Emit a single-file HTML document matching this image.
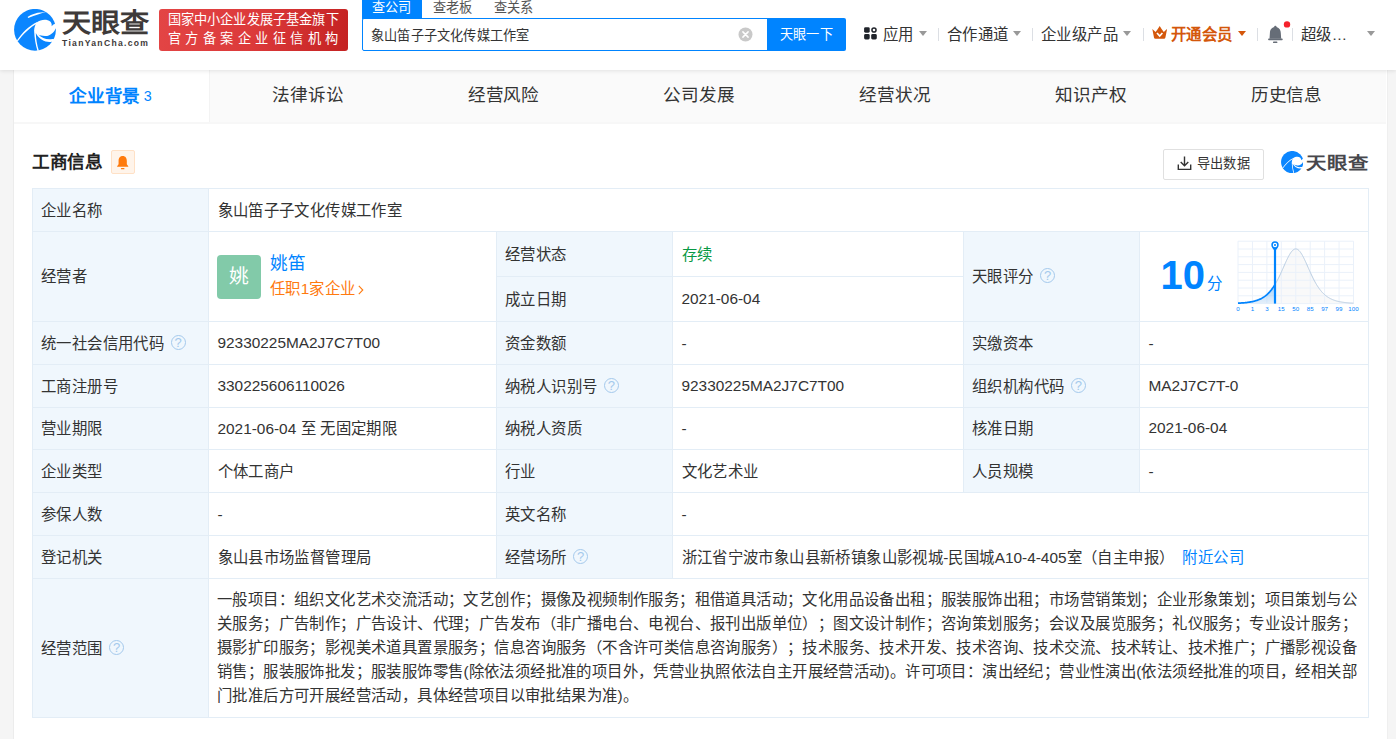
<!DOCTYPE html>
<html lang="zh-CN">
<head>
<meta charset="utf-8">
<title>天眼查</title>
<style>
*{box-sizing:border-box;margin:0;padding:0}
html,body{width:1396px;height:739px;overflow:hidden}
body{font-family:"Liberation Sans",sans-serif;background:#f5f5f5;color:#333;position:relative;font-size:15.4px}
.abs{position:absolute}
/* header */
#hdr{position:absolute;left:0;top:0;width:1396px;height:70px;background:#fff;box-shadow:0 1px 4px rgba(0,0,0,.10);z-index:5}
#logoTxt{position:absolute;left:61.7px;top:6px;font-size:26px;font-weight:bold;color:#3e3a39;line-height:34px;white-space:nowrap;transform-origin:0 50%;transform:scaleX(1.12);letter-spacing:0}
#logoSub{position:absolute;left:62px;top:38px;font-size:8.6px;font-weight:bold;color:#3e3a39;line-height:11px;letter-spacing:1.3px;white-space:nowrap}
#banner{position:absolute;left:159px;top:9px;width:189px;height:42px;border-radius:3px;background:linear-gradient(100deg,#e34545 0%,#dc3a3a 50%,#c42222 100%);color:#fff;font-size:13.2px;white-space:nowrap}
#banner div{position:absolute;left:8.5px;line-height:15px}
#stabs{position:absolute;left:362px;top:0;height:14px;font-size:13.2px;line-height:14px;white-space:nowrap;color:#555}
#stabs span{position:absolute;top:1px;letter-spacing:.2px}
#sinput{position:absolute;left:362px;top:18px;width:406px;height:33px;border:1px solid #0084ff;border-radius:2px 0 0 2px;background:#fff;font-size:13.2px;line-height:33px;padding-left:8px;color:#333;letter-spacing:.2px}
#sbtn{position:absolute;left:767px;top:18px;width:79px;height:33px;background:#0084ff;border-radius:0 2px 2px 0;color:#fff;font-size:13.2px;letter-spacing:.4px;line-height:33px;text-align:center}
.nav{letter-spacing:.4px;position:absolute;top:25px;line-height:20px;font-size:15.4px;color:#333;white-space:nowrap}
.sep{position:absolute;top:28px;width:1px;height:13px;background:#dcdfe4}
.car{position:absolute;top:31px;width:0;height:0;border-left:4px solid transparent;border-right:4px solid transparent;border-top:5px solid #999}
/* main */
#main{position:absolute;left:13px;top:70px;width:1375px;height:669px;background:#fff;border-left:1px solid #ececec;border-right:1px solid #efefef}
#tabs{position:absolute;left:0;top:0;width:1372px;height:54px;background:#fafafa;border-bottom:2px solid #f7f7f7}
.tab{letter-spacing:-.1px;position:absolute;top:0;height:52px;line-height:51px;text-align:center;font-size:17.6px;color:#333;width:195.77px}
.tab.on{background:#fff;color:#0084ff;font-weight:bold;letter-spacing:-.4px;padding-right:2px;line-height:53px;border-right:1px solid #f3f3f3}
.tab.on small{font-size:14.3px;font-weight:normal;margin-left:4px;position:relative;top:-1px;letter-spacing:0}
#ttl{position:absolute;left:32px;top:149px;font-size:17.6px;font-weight:bold;color:#222;line-height:26px;letter-spacing:-.5px}
#bell{position:absolute;left:111px;top:150px;width:24px;height:24px;border:1px solid #ffe1c6;background:#fff4ea;border-radius:2px}
#exp{position:absolute;left:1163px;top:149px;width:101px;height:31px;border:1px solid #e0e0e0;border-radius:2px;background:#fff;font-size:13.2px;line-height:29px;color:#333}
#wm{position:absolute;left:1305.5px;top:150px;font-size:16.5px;font-weight:bold;color:#47474c;line-height:26px;white-space:nowrap;transform-origin:0 50%;transform:scaleX(1.23)}
/* table */
#tb{position:absolute;left:32px;top:188px;width:1337px;border-collapse:separate;border-spacing:0;table-layout:fixed;border-right:1px solid #e3edf6;border-bottom:1px solid #e3edf6;font-size:15.4px;color:#333}
#tb td{letter-spacing:.4px;border-left:1px solid #e3edf6;border-top:1px solid #e3edf6;padding:1px 0 0 8.5px;vertical-align:middle;background:#fff;line-height:22px;white-space:nowrap;overflow:hidden}
#tb td.l{background:#f0f7fd;padding-left:8px}
.q{display:inline-block;width:15px;height:15px;border:1px solid #a4c9ec;border-radius:50%;color:#a4c9ec;font-size:13px;line-height:13px;text-align:center;vertical-align:middle;margin-left:6.5px;position:relative;top:-2px;letter-spacing:0}
a{color:#0084ff;text-decoration:none}
#tb td.n,#tb .n,.n{letter-spacing:0}
#tb td.n{padding:0 0 1px 8.5px}
body{text-spacing-trim:space-all}
#tb td#scope{white-space:nowrap;line-height:24.2px;padding:0 0 0 8px}
.sl{width:1140px;height:24.2px;text-align:justify;text-align-last:justify;white-space:nowrap;overflow:hidden}
.sl.last{text-align:left;text-align-last:left}
</style>
</head>
<body>
<div id="hdr">
<svg class="abs" style="left:14px;top:8.6px" width="42" height="42" viewBox="0 0 42 42">
<circle cx="21" cy="20.8" r="20.9" fill="#0b86ff"/>
<path fill="#fff" d="M22.7 13.4 C27 10.3 33 9.8 36.2 12.6 C37.6 14 38 15.8 37.5 17.2 L39.8 15.3 L43 14.5 L43 19.5 L41.7 19.5 C40 24 35 27.5 31 27 C28 26.8 26 26.5 24.2 25.5 C28 29.5 33 31 38.5 30 L43 30.5 L42 34.5 L37.8 32.8 C32 33.8 25.5 31 21.8 24 C22 30 23 36 24.9 41.8 L23.5 42 C21.8 36 20.3 29 20.1 21.4 C20.3 18.5 21.2 15.8 22.7 13.4 Z"/>
<path fill="#fff" d="M23.2 13 C15 16.8 8 24 2.9 31.5 L3.8 32.3 C9 25 16 18.2 23.4 14.4 Z"/>
<path fill="#fff" d="M13.6 7.9 C17.5 5 24 3 32.2 2.9 C27 4 21.5 6.2 14.2 8.9 Z"/>
</svg>
<div id="logoTxt">天眼查</div>
<div id="logoSub">TianYanCha.com</div>
<div id="banner"><div style="top:3px;letter-spacing:0.17px">国家中小企业发展子基金旗下</div><div style="top:22px;letter-spacing:4.55px">官方备案企业征信机构</div></div>
<div id="stabs"><div class="abs" style="left:0;top:0;width:59.5px;height:18.5px;background:#0084ff"></div><span style="left:10px;color:#fff">查公司</span><span style="left:71px">查老板</span><span style="left:131.5px">查关系</span></div>
<div id="sinput">象山笛子子文化传媒工作室</div>
<svg class="abs" style="left:738px;top:27px" width="15" height="15" viewBox="0 0 15 15"><circle cx="7.5" cy="7.5" r="7" fill="#c9c9c9"/><path d="M4.9 4.9 L10.1 10.1 M10.1 4.9 L4.9 10.1" stroke="#fff" stroke-width="1.5" stroke-linecap="round"/></svg>
<div id="sbtn">天眼一下</div>
<svg class="abs" style="left:864px;top:27.2px" width="13" height="13" viewBox="0 0 13 13"><rect x="0.1" y="0.2" width="5.6" height="5.5" rx="1.4" fill="#20242b"/><rect x="0.1" y="7" width="5.6" height="5.5" rx="1.4" fill="#20242b"/><rect x="7.2" y="7" width="5.6" height="5.5" rx="1.4" fill="#20242b"/><circle cx="10" cy="2.95" r="2.05" fill="none" stroke="#20242b" stroke-width="1.5"/></svg>
<div class="nav" style="left:883px">应用</div><div class="car" style="left:919px"></div><div class="sep" style="left:938px"></div>
<div class="nav" style="left:947px">合作通道</div><div class="car" style="left:1013px"></div><div class="sep" style="left:1032px"></div>
<div class="nav" style="left:1041px">企业级产品</div><div class="car" style="left:1123px"></div><div class="sep" style="left:1143px"></div>
<svg class="abs" style="left:1152px;top:26.2px" width="15.4" height="13" viewBox="0 0 15.4 13"><path d="M0.3 3 L3.6 6.1 Q5.6 3.4 7.7 0 Q9.8 3.4 11.8 6.1 L15.1 3 L13.4 11.4 Q13.2 12.7 12 12.7 L3.4 12.7 Q2.2 12.7 2 11.4 Z" fill="#d4570b"/><path d="M5 7 L7.7 10 L10.4 7" fill="none" stroke="#fff" stroke-width="1.7"/></svg>
<div class="nav" style="left:1171px;color:#d4570b;font-weight:bold">开通会员</div><div class="car" style="left:1238px;border-top-color:#d4570b"></div><div class="sep" style="left:1257px"></div>
<svg class="abs" style="left:1266px;top:20px" width="26" height="26" viewBox="0 0 26 26"><rect x="8.2" y="5.8" width="2.3" height="2.4" rx="1" fill="#666d77"/><path d="M3.5 18.7 L3.9 13 C3.9 9.4 6.2 6.9 9.35 6.9 C12.5 6.9 14.8 9.4 14.8 13 L15.2 18.7 Z" fill="#666d77"/><rect x="2.1" y="18.4" width="14.6" height="1.8" rx="0.8" fill="#666d77"/><rect x="7" y="21.6" width="4.4" height="1.5" rx="0.7" fill="#666d77"/><circle cx="21" cy="4.4" r="3.2" fill="#f5222d"/></svg>
<div class="sep" style="left:1292px"></div>
<div class="nav" style="left:1301px">超级…</div><div class="car" style="left:1367px"></div>
</div>
<div id="main">
<div id="tabs"><div class="tab on" style="left:0;width:196px">企业背景<small>3</small></div><div class="tab" style="left:195.77px">法律诉讼</div><div class="tab" style="left:391.54px">经营风险</div><div class="tab" style="left:587.31px">公司发展</div><div class="tab" style="left:783.08px">经营状况</div><div class="tab" style="left:978.85px">知识产权</div><div class="tab" style="left:1174.62px">历史信息</div></div>
</div>
<div id="ttl">工商信息</div>
<div id="bell"><svg class="abs" style="left:4.3px;top:3.6px" width="13.4" height="15.6" viewBox="0 0 12 14"><path d="M6 0.8 C8.6 0.8 9.7 2.8 9.7 5.2 L9.7 8.4 L11 10 L11 10.6 L1 10.6 L1 10 L2.3 8.4 L2.3 5.2 C2.3 2.8 3.4 0.8 6 0.8 Z" fill="#ff7a0c"/><rect x="4.4" y="11.6" width="3.2" height="1.3" rx="0.6" fill="#ff7a0c"/></svg></div>
<div id="exp"><svg class="abs" style="left:13px;top:5.5px" width="15" height="15" viewBox="0 0 15 15"><path d="M7.5 0.4 V9.6 M3.7 6 L7.5 9.8 L11.3 6 M1.3 8.6 V13.4 H13.7 V8.6" fill="none" stroke="#333" stroke-width="1.4"/></svg><span class="abs" style="left:33px;top:-1px;letter-spacing:.2px">导出数据</span></div>
<svg class="abs" style="left:1280.5px;top:150.7px" width="22.4" height="22.4" viewBox="0 0 42 42">
<circle cx="21" cy="20.8" r="20.9" fill="#0b86ff"/>
<path fill="#fff" d="M22.7 13.4 C27 10.3 33 9.8 36.2 12.6 C37.6 14 38 15.8 37.5 17.2 L39.8 15.3 L43 14.5 L43 19.5 L41.7 19.5 C40 24 35 27.5 31 27 C28 26.8 26 26.5 24.2 25.5 C28 29.5 33 31 38.5 30 L43 30.5 L42 34.5 L37.8 32.8 C32 33.8 25.5 31 21.8 24 C22 30 23 36 24.9 41.8 L23.5 42 C21.8 36 20.3 29 20.1 21.4 C20.3 18.5 21.2 15.8 22.7 13.4 Z"/>
<path fill="#fff" d="M23.2 13 C15 16.8 8 24 2.9 31.5 L3.8 32.3 C9 25 16 18.2 23.4 14.4 Z"/>
</svg>
<div id="wm">天眼查</div>
<table id="tb">
<colgroup><col style="width:176px"><col style="width:288px"><col style="width:176px"><col style="width:291px"><col style="width:176px"><col style="width:229px"></colgroup>
<tr style="height:43px"><td class="l">企业名称</td><td colspan="5">象山笛子子文化传媒工作室</td></tr>
<tr style="height:45px"><td class="l" rowspan="2">经营者</td><td rowspan="2" style="position:relative">&nbsp;</td><td class="l">经营状态</td><td style="color:#089944">存续</td><td class="l" rowspan="2">天眼评分<span class="q">?</span></td><td rowspan="2">&nbsp;</td></tr>
<tr style="height:45px"><td class="l">成立日期</td><td class="n">2021-06-04</td></tr>
<tr style="height:43px"><td class="l">统一社会信用代码<span class="q">?</span></td><td class="n">92330225MA2J7C7T00</td><td class="l">资金数额</td><td>-</td><td class="l">实缴资本</td><td>-</td></tr>
<tr style="height:43px"><td class="l">工商注册号</td><td class="n">330225606110026</td><td class="l">纳税人识别号<span class="q">?</span></td><td class="n">92330225MA2J7C7T00</td><td class="l">组织机构代码<span class="q">?</span></td><td class="n">MA2J7C7T-0</td></tr>
<tr style="height:42px"><td class="l">营业期限</td><td><span class="n">2021-06-04 </span>至<span class="n"> </span>无固定期限</td><td class="l">纳税人资质</td><td>-</td><td class="l">核准日期</td><td class="n">2021-06-04</td></tr>
<tr style="height:43px"><td class="l">企业类型</td><td>个体工商户</td><td class="l">行业</td><td>文化艺术业</td><td class="l">人员规模</td><td>-</td></tr>
<tr style="height:43px"><td class="l">参保人数</td><td>-</td><td class="l">英文名称</td><td colspan="3">-</td></tr>
<tr style="height:43px"><td class="l">登记机关</td><td>象山县市场监督管理局</td><td class="l">经营场所<span class="q">?</span></td><td colspan="3">浙江省宁波市象山县新桥镇象山影视城<span class="n">-</span>民国城<span class="n">A10-4-405</span>室（自主申报）<a style="margin-left:8px">附近公司</a></td></tr>
<tr style="height:139px"><td class="l">经营范围<span class="q">?</span></td><td colspan="5" id="scope"><div class="sl">一般项目：组织文化艺术交流活动；文艺创作；摄像及视频制作服务；租借道具活动；文化用品设备出租；服装服饰出租；市场营销策划；企业形象策划；项目策划与公</div><div class="sl">关服务；广告制作；广告设计、代理；广告发布（非广播电台、电视台、报刊出版单位）；图文设计制作；咨询策划服务；会议及展览服务；礼仪服务；专业设计服务；</div><div class="sl">摄影扩印服务；影视美术道具置景服务；信息咨询服务（不含许可类信息咨询服务）；技术服务、技术开发、技术咨询、技术交流、技术转让、技术推广；广播影视设备</div><div class="sl">销售；服装服饰批发；服装服饰零售<span class="n">(</span>除依法须经批准的项目外，凭营业执照依法自主开展经营活动<span class="n">)</span>。许可项目：演出经纪；营业性演出<span class="n">(</span>依法须经批准的项目，经相关部</div><div class="sl last">门批准后方可开展经营活动，具体经营项目以审批结果为准<span class="n">)</span>。</div></td></tr>
</table>
<div class="abs" style="left:217px;top:255px;width:44px;height:44px;border-radius:4px;background:#82caa9;color:#fff;font-size:19.8px;line-height:42px;text-align:center">姚</div>
<a class="abs" style="left:270px;top:250px;font-size:17.6px;line-height:26px">姚笛</a>
<div class="abs" style="left:270px;top:278px;font-size:15.4px;line-height:22px;color:#ff7a0f;white-space:nowrap;letter-spacing:.4px">任职<span class="n">1</span>家企业<svg width="6" height="10" viewBox="0 0 6 10" style="margin-left:2px;position:relative;top:0.5px"><path d="M0.8 0.8 L4.8 5 L0.8 9.2" fill="none" stroke="#ff7a0f" stroke-width="1.1"/></svg></div>
<div class="abs" style="left:1160.5px;top:251px;font-size:40px;font-weight:bold;color:#0084ff;line-height:48px;white-space:nowrap">10<span style="font-size:15.4px;font-weight:normal;margin-left:1.5px">分</span></div>
<svg class="abs" style="left:1230px;top:236px" width="132" height="82" viewBox="0 0 132 82">
<defs><linearGradient id="lg" x1="0" y1="0" x2="0" y2="1"><stop offset="0" stop-color="#0084ff" stop-opacity=".34"/><stop offset="1" stop-color="#0084ff" stop-opacity=".08"/></linearGradient></defs>
<path d="M8.00 67.17 L8.50 67.14 L9.00 67.12 L9.50 67.09 L10.00 67.06 L10.50 67.03 L11.00 67.00 L11.50 66.97 L12.00 66.94 L12.50 66.90 L13.00 66.86 L13.50 66.82 L14.00 66.78 L14.50 66.73 L15.00 66.69 L15.50 66.63 L16.00 66.58 L16.50 66.53 L17.00 66.47 L17.50 66.41 L18.00 66.34 L18.50 66.27 L19.00 66.20 L19.50 66.12 L20.00 66.04 L20.50 65.96 L21.00 65.87 L21.50 65.77 L22.00 65.67 L22.50 65.57 L23.00 65.46 L23.50 65.34 L24.00 65.22 L24.50 65.09 L25.00 64.96 L25.50 64.81 L26.00 64.66 L26.50 64.51 L27.00 64.34 L27.50 64.16 L28.00 63.98 L28.50 63.79 L29.00 63.58 L29.50 63.37 L30.00 63.15 L30.50 62.91 L31.00 62.66 L31.50 62.40 L32.00 62.13 L32.50 61.84 L33.00 61.54 L33.50 61.23 L34.00 60.90 L34.50 60.55 L35.00 60.19 L35.50 59.81 L36.00 59.41 L36.50 58.99 L37.00 58.56 L37.50 58.10 L38.00 57.63 L38.50 57.13 L39.00 56.61 L39.50 56.07 L40.00 55.51 L40.50 54.92 L41.00 54.31 L41.50 53.68 L42.00 53.02 L42.50 52.33 L43.00 51.62 L43.50 50.88 L44.00 50.12 L44.50 49.33 L45.00 48.51 L45.50 47.67 L46.00 46.80 L46.50 45.90 L47.00 44.98 L47.50 44.04 L48.00 43.07 L48.50 42.08 L49.00 41.06 L49.50 40.02 L50.00 38.97 L50.50 37.89 L51.00 36.80 L51.50 35.70 L52.00 34.59 L52.50 33.46 L53.00 32.33 L53.50 31.20 L54.00 30.06 L54.50 28.93 L55.00 27.81 L55.50 26.70 L56.00 25.60 L56.50 24.52 L57.00 23.46 L57.50 22.43 L58.00 21.43 L58.50 20.47 L59.00 19.54 L59.50 18.66 L60.00 17.83 L60.50 17.05 L61.00 16.33 L61.50 15.67 L62.00 15.07 L62.50 14.54 L63.00 14.08 L63.50 13.70 L64.00 13.38 L64.50 13.15 L65.00 12.99 L65.50 12.91 L66.00 12.91 L66.50 12.99 L67.00 13.15 L67.50 13.38 L68.00 13.70 L68.50 14.08 L69.00 14.54 L69.50 15.07 L70.00 15.67 L70.50 16.33 L71.00 17.05 L71.50 17.83 L72.00 18.66 L72.50 19.54 L73.00 20.47 L73.50 21.43 L74.00 22.43 L74.50 23.46 L75.00 24.52 L75.50 25.60 L76.00 26.70 L76.50 27.81 L77.00 28.93 L77.50 30.06 L78.00 31.20 L78.50 32.33 L79.00 33.46 L79.50 34.59 L80.00 35.70 L80.50 36.80 L81.00 37.89 L81.50 38.97 L82.00 40.02 L82.50 41.06 L83.00 42.08 L83.50 43.07 L84.00 44.04 L84.50 44.98 L85.00 45.90 L85.50 46.80 L86.00 47.67 L86.50 48.51 L87.00 49.33 L87.50 50.12 L88.00 50.88 L88.50 51.62 L89.00 52.33 L89.50 53.02 L90.00 53.68 L90.50 54.31 L91.00 54.92 L91.50 55.51 L92.00 56.07 L92.50 56.61 L93.00 57.13 L93.50 57.63 L94.00 58.10 L94.50 58.56 L95.00 58.99 L95.50 59.41 L96.00 59.81 L96.50 60.19 L97.00 60.55 L97.50 60.90 L98.00 61.23 L98.50 61.54 L99.00 61.84 L99.50 62.13 L100.00 62.40 L100.50 62.66 L101.00 62.91 L101.50 63.15 L102.00 63.37 L102.50 63.58 L103.00 63.79 L103.50 63.98 L104.00 64.16 L104.50 64.34 L105.00 64.51 L105.50 64.66 L106.00 64.81 L106.50 64.96 L107.00 65.09 L107.50 65.22 L108.00 65.34 L108.50 65.46 L109.00 65.57 L109.50 65.67 L110.00 65.77 L110.50 65.87 L111.00 65.96 L111.50 66.04 L112.00 66.12 L112.50 66.20 L113.00 66.27 L113.50 66.34 L114.00 66.41 L114.50 66.47 L115.00 66.53 L115.50 66.58 L116.00 66.63 L116.50 66.69 L117.00 66.73 L117.50 66.78 L118.00 66.82 L118.50 66.86 L119.00 66.90 L119.50 66.94 L120.00 66.97 L120.50 67.00 L121.00 67.03 L121.50 67.06 L122.00 67.09 L122.50 67.12 L123.00 67.14 L123.50 67.17 L123.50 67.60 L8.00 67.60 Z" fill="#f6f6f6" fill-opacity=".7"/>
<path d="M8.00 5.20V67.60M8.00 5.20H123.50M22.44 5.20V67.60M8.00 13.00H123.50M36.88 5.20V67.60M8.00 20.80H123.50M51.31 5.20V67.60M8.00 28.60H123.50M65.75 5.20V67.60M8.00 36.40H123.50M80.19 5.20V67.60M8.00 44.20H123.50M94.62 5.20V67.60M8.00 52.00H123.50M109.06 5.20V67.60M8.00 59.80H123.50M123.50 5.20V67.60M8.00 67.60H123.50" stroke="#eaf1fa" stroke-width="1" fill="none"/>
<path d="M8.00 67.17 L8.50 67.14 L9.00 67.12 L9.50 67.09 L10.00 67.06 L10.50 67.03 L11.00 67.00 L11.50 66.97 L12.00 66.94 L12.50 66.90 L13.00 66.86 L13.50 66.82 L14.00 66.78 L14.50 66.73 L15.00 66.69 L15.50 66.63 L16.00 66.58 L16.50 66.53 L17.00 66.47 L17.50 66.41 L18.00 66.34 L18.50 66.27 L19.00 66.20 L19.50 66.12 L20.00 66.04 L20.50 65.96 L21.00 65.87 L21.50 65.77 L22.00 65.67 L22.50 65.57 L23.00 65.46 L23.50 65.34 L24.00 65.22 L24.50 65.09 L25.00 64.96 L25.50 64.81 L26.00 64.66 L26.50 64.51 L27.00 64.34 L27.50 64.16 L28.00 63.98 L28.50 63.79 L29.00 63.58 L29.50 63.37 L30.00 63.15 L30.50 62.91 L31.00 62.66 L31.50 62.40 L32.00 62.13 L32.50 61.84 L33.00 61.54 L33.50 61.23 L34.00 60.90 L34.50 60.55 L35.00 60.19 L35.50 59.81 L36.00 59.41 L36.50 58.99 L37.00 58.56 L37.50 58.10 L38.00 57.63 L38.50 57.13 L39.00 56.61 L39.50 56.07 L40.00 55.51 L40.50 54.92 L41.00 54.31 L41.50 53.68 L42.00 53.02 L42.50 52.33 L43.00 51.62 L43.50 50.88 L44.00 50.12 L44.50 49.33 L45.00 48.51 L45.00 67.60 L8.00 67.60 Z" fill="url(#lg)"/>
<path d="M8.00 67.17 L8.50 67.14 L9.00 67.12 L9.50 67.09 L10.00 67.06 L10.50 67.03 L11.00 67.00 L11.50 66.97 L12.00 66.94 L12.50 66.90 L13.00 66.86 L13.50 66.82 L14.00 66.78 L14.50 66.73 L15.00 66.69 L15.50 66.63 L16.00 66.58 L16.50 66.53 L17.00 66.47 L17.50 66.41 L18.00 66.34 L18.50 66.27 L19.00 66.20 L19.50 66.12 L20.00 66.04 L20.50 65.96 L21.00 65.87 L21.50 65.77 L22.00 65.67 L22.50 65.57 L23.00 65.46 L23.50 65.34 L24.00 65.22 L24.50 65.09 L25.00 64.96 L25.50 64.81 L26.00 64.66 L26.50 64.51 L27.00 64.34 L27.50 64.16 L28.00 63.98 L28.50 63.79 L29.00 63.58 L29.50 63.37 L30.00 63.15 L30.50 62.91 L31.00 62.66 L31.50 62.40 L32.00 62.13 L32.50 61.84 L33.00 61.54 L33.50 61.23 L34.00 60.90 L34.50 60.55 L35.00 60.19 L35.50 59.81 L36.00 59.41 L36.50 58.99 L37.00 58.56 L37.50 58.10 L38.00 57.63 L38.50 57.13 L39.00 56.61 L39.50 56.07 L40.00 55.51 L40.50 54.92 L41.00 54.31 L41.50 53.68 L42.00 53.02 L42.50 52.33 L43.00 51.62 L43.50 50.88 L44.00 50.12 L44.50 49.33 L45.00 48.51 L45.50 47.67 L46.00 46.80 L46.50 45.90 L47.00 44.98 L47.50 44.04 L48.00 43.07 L48.50 42.08 L49.00 41.06 L49.50 40.02 L50.00 38.97 L50.50 37.89 L51.00 36.80 L51.50 35.70 L52.00 34.59 L52.50 33.46 L53.00 32.33 L53.50 31.20 L54.00 30.06 L54.50 28.93 L55.00 27.81 L55.50 26.70 L56.00 25.60 L56.50 24.52 L57.00 23.46 L57.50 22.43 L58.00 21.43 L58.50 20.47 L59.00 19.54 L59.50 18.66 L60.00 17.83 L60.50 17.05 L61.00 16.33 L61.50 15.67 L62.00 15.07 L62.50 14.54 L63.00 14.08 L63.50 13.70 L64.00 13.38 L64.50 13.15 L65.00 12.99 L65.50 12.91 L66.00 12.91 L66.50 12.99 L67.00 13.15 L67.50 13.38 L68.00 13.70 L68.50 14.08 L69.00 14.54 L69.50 15.07 L70.00 15.67 L70.50 16.33 L71.00 17.05 L71.50 17.83 L72.00 18.66 L72.50 19.54 L73.00 20.47 L73.50 21.43 L74.00 22.43 L74.50 23.46 L75.00 24.52 L75.50 25.60 L76.00 26.70 L76.50 27.81 L77.00 28.93 L77.50 30.06 L78.00 31.20 L78.50 32.33 L79.00 33.46 L79.50 34.59 L80.00 35.70 L80.50 36.80 L81.00 37.89 L81.50 38.97 L82.00 40.02 L82.50 41.06 L83.00 42.08 L83.50 43.07 L84.00 44.04 L84.50 44.98 L85.00 45.90 L85.50 46.80 L86.00 47.67 L86.50 48.51 L87.00 49.33 L87.50 50.12 L88.00 50.88 L88.50 51.62 L89.00 52.33 L89.50 53.02 L90.00 53.68 L90.50 54.31 L91.00 54.92 L91.50 55.51 L92.00 56.07 L92.50 56.61 L93.00 57.13 L93.50 57.63 L94.00 58.10 L94.50 58.56 L95.00 58.99 L95.50 59.41 L96.00 59.81 L96.50 60.19 L97.00 60.55 L97.50 60.90 L98.00 61.23 L98.50 61.54 L99.00 61.84 L99.50 62.13 L100.00 62.40 L100.50 62.66 L101.00 62.91 L101.50 63.15 L102.00 63.37 L102.50 63.58 L103.00 63.79 L103.50 63.98 L104.00 64.16 L104.50 64.34 L105.00 64.51 L105.50 64.66 L106.00 64.81 L106.50 64.96 L107.00 65.09 L107.50 65.22 L108.00 65.34 L108.50 65.46 L109.00 65.57 L109.50 65.67 L110.00 65.77 L110.50 65.87 L111.00 65.96 L111.50 66.04 L112.00 66.12 L112.50 66.20 L113.00 66.27 L113.50 66.34 L114.00 66.41 L114.50 66.47 L115.00 66.53 L115.50 66.58 L116.00 66.63 L116.50 66.69 L117.00 66.73 L117.50 66.78 L118.00 66.82 L118.50 66.86 L119.00 66.90 L119.50 66.94 L120.00 66.97 L120.50 67.00 L121.00 67.03 L121.50 67.06 L122.00 67.09 L122.50 67.12 L123.00 67.14 L123.50 67.17" stroke="#b9cde2" stroke-width="1" fill="none"/>
<path d="M8.00 67.17 L8.50 67.14 L9.00 67.12 L9.50 67.09 L10.00 67.06 L10.50 67.03 L11.00 67.00 L11.50 66.97 L12.00 66.94 L12.50 66.90 L13.00 66.86 L13.50 66.82 L14.00 66.78 L14.50 66.73 L15.00 66.69 L15.50 66.63 L16.00 66.58 L16.50 66.53 L17.00 66.47 L17.50 66.41 L18.00 66.34 L18.50 66.27 L19.00 66.20 L19.50 66.12 L20.00 66.04 L20.50 65.96 L21.00 65.87 L21.50 65.77 L22.00 65.67 L22.50 65.57 L23.00 65.46 L23.50 65.34 L24.00 65.22 L24.50 65.09 L25.00 64.96 L25.50 64.81 L26.00 64.66 L26.50 64.51 L27.00 64.34 L27.50 64.16 L28.00 63.98 L28.50 63.79 L29.00 63.58 L29.50 63.37 L30.00 63.15 L30.50 62.91 L31.00 62.66 L31.50 62.40 L32.00 62.13 L32.50 61.84 L33.00 61.54 L33.50 61.23 L34.00 60.90 L34.50 60.55 L35.00 60.19 L35.50 59.81 L36.00 59.41 L36.50 58.99 L37.00 58.56 L37.50 58.10 L38.00 57.63 L38.50 57.13 L39.00 56.61 L39.50 56.07 L40.00 55.51 L40.50 54.92 L41.00 54.31 L41.50 53.68 L42.00 53.02 L42.50 52.33 L43.00 51.62 L43.50 50.88 L44.00 50.12 L44.50 49.33 L45.00 48.51" stroke="#0084ff" stroke-width="1.7" fill="none"/>
<path d="M45.00 12V67.60" stroke="#0084ff" stroke-width="2.2"/>
<path d="M45.00 15.5 C43.50 13 41.30 11.400000000000006 41.30 9 A3.7 3.7 0 1 1 48.70 9 C48.70 11.400000000000006 46.50 13 45.00 15.5 Z" fill="#0084ff"/>
<circle cx="45.00" cy="9" r="2.2" fill="#fff"/><circle cx="45.00" cy="9" r="1.05" fill="#0084ff"/>
<g font-family="Liberation Sans, sans-serif" font-size="6.2" fill="#0084ff"><text x="8.00" y="75.20" text-anchor="middle">0</text><text x="22.44" y="75.20" text-anchor="middle">1</text><text x="36.88" y="75.20" text-anchor="middle">3</text><text x="51.31" y="75.20" text-anchor="middle">15</text><text x="65.75" y="75.20" text-anchor="middle">50</text><text x="80.19" y="75.20" text-anchor="middle">85</text><text x="94.62" y="75.20" text-anchor="middle">97</text><text x="109.06" y="75.20" text-anchor="middle">99</text><text x="123.50" y="75.20" text-anchor="middle">100</text></g>
</svg>

</body>
</html>
